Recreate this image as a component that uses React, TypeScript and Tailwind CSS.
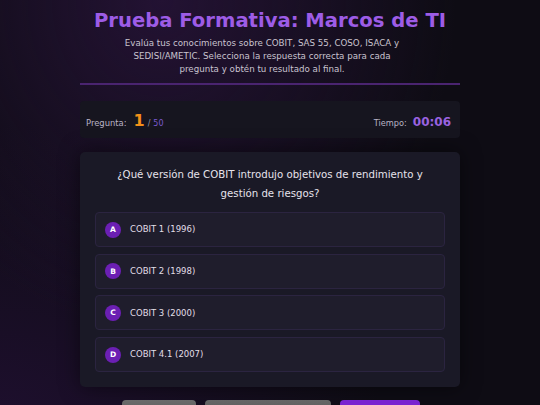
import React from "react";

const options = [
  { key: "A", text: "COBIT 1 (1996)" },
  { key: "B", text: "COBIT 2 (1998)" },
  { key: "C", text: "COBIT 3 (2000)" },
  { key: "D", text: "COBIT 4.1 (2007)" },
];

const App: React.FC = () => {
  return (
    <div className="min-h-screen w-full overflow-hidden bg-[#0e0c14] bg-[radial-gradient(ellipse_at_30%_0%,#231233_0%,transparent_55%),radial-gradient(ellipse_at_0%_100%,#1e0f2e_0%,transparent_50%)] font-['DejaVu_Sans',sans-serif]">
      <div className="mx-auto w-[380px] pt-[8px]">
        <h1 className="text-center text-[19.6px] font-bold leading-[26px] text-[#9d5ce6]">
          Prueba Formativa: Marcos de TI
        </h1>
        <p className="mx-auto mt-[3px] w-[306px] pr-[16px] text-center text-[8.7px] leading-[13px] text-[#c9c3cf]">
          Evalúa tus conocimientos sobre COBIT, SAS 55, COSO, ISACA y
          SEDISI/AMETIC. Selecciona la respuesta correcta para cada pregunta y
          obtén tu resultado al final.
        </p>
        <div className="mt-[7px] h-[2px] bg-[#4a2470]" />

        <div className="mt-[16px] flex h-[37px] items-end justify-between rounded-[4px] bg-[#16151f] pb-[8px] pl-[6px] pr-[9px]">
          <div className="flex items-baseline">
            <span className="text-[8.4px] text-[#b9b3c6]">Pregunta:</span>
            <span className="ml-[7px] text-[16px] font-bold leading-none text-[#f39019]">1</span>
            <span className="ml-[3px] text-[8px] text-[#9a94a8]">/</span>
            <span className="ml-[3px] text-[8px] text-[#7a5ad0]">50</span>
          </div>
          <div className="flex items-baseline gap-[6px] pb-[1px]">
            <span className="text-[8.2px] text-[#b9b3c6]">Tiempo:</span>
            <span className="text-[12px] font-bold leading-none text-[#9a62e0]">00:06</span>
          </div>
        </div>

        <div className="mt-[14px] rounded-[5px] bg-[#1a1926] px-[15px] pb-[15px] pt-[14px] shadow-[0_0_20px_rgba(0,0,0,0.5)]">
          <p className="px-[18px] text-center text-[10.2px] leading-[18.5px] text-[#e6e3ec]">
            ¿Qué versión de COBIT introdujo objetivos de rendimiento y gestión
            de riesgos?
          </p>
          <div className="mt-[9px] flex flex-col gap-[6.7px]">
            {options.map((o) => (
              <div
                key={o.key}
                className="flex h-[35px] items-center gap-[9px] rounded-[4px] border border-[#2b2440] bg-[#1f1d2c] pl-[9px]"
              >
                <span className="flex h-[16px] w-[16px] items-center justify-center rounded-full bg-[#6b1fb3] text-[7.5px] font-bold text-white">
                  {o.key}
                </span>
                <span className="text-[8.5px] text-[#e2dfe8]">{o.text}</span>
              </div>
            ))}
          </div>
        </div>

        <div className="mt-[13px] flex justify-center gap-[9px] pl-[2px]">
          <div className="h-[26px] w-[74px] rounded-[4px] bg-[linear-gradient(#6a6a6a,#555)]" />
          <div className="h-[26px] w-[126px] rounded-[4px] bg-[linear-gradient(#666,#525252)]" />
          <div className="h-[26px] w-[80px] rounded-[4px] bg-[#7a22d0]" />
        </div>
      </div>
    </div>
  );
};

export default App;
